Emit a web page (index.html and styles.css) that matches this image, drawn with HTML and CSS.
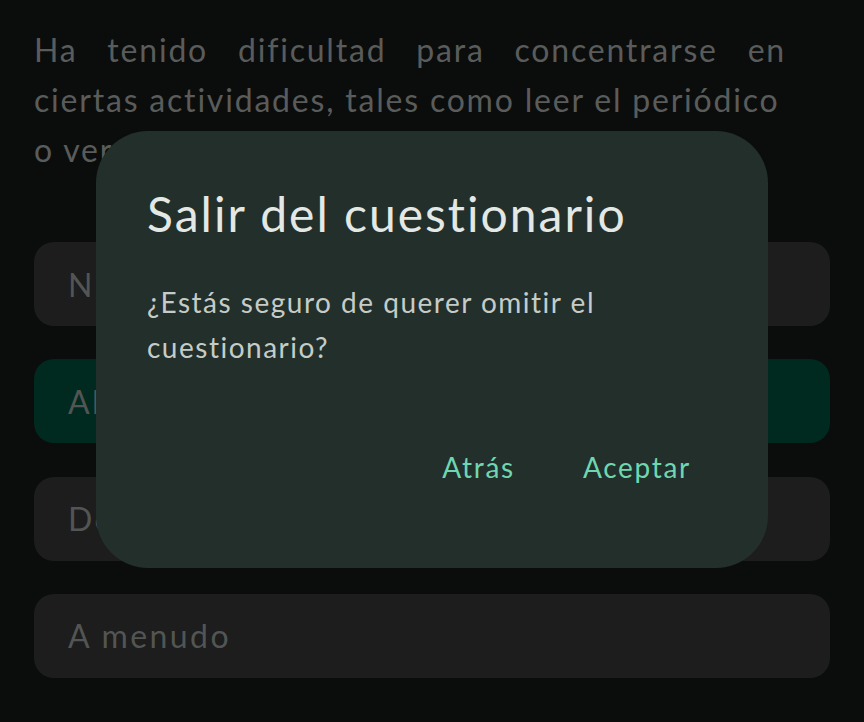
FILE: index.html
```html
<!DOCTYPE html>
<html lang="es">
<head>
<meta charset="utf-8">
<title>Cuestionario</title>
<link rel="stylesheet" href="styles.css">
</head>
<body>
<main class="screen">
  <div class="question">
    <span class="line line-justify">Ha tenido dificultad para concentrarse en</span>
    <span class="line">ciertas actividades, tales como leer el periódico</span>
    <span class="line">o ver televisión?</span>
  </div>
  <div class="options">
    <div class="option">Nunca</div>
    <div class="option option-selected">Algunas veces</div>
    <div class="option">De vez en cuando</div>
    <div class="option">A menudo</div>
  </div>
</main>
<div class="dialog" role="dialog">
  <h1 class="dialog-title">Salir del cuestionario</h1>
  <p class="dialog-body">¿Estás seguro de querer omitir el cuestionario?</p>
  <div class="dialog-actions">
    <button class="dialog-btn">Atrás</button>
    <button class="dialog-btn">Aceptar</button>
  </div>
</div>
</body>
</html>
```

FILE: styles.css
```css
html, body {
  margin: 0;
  padding: 0;
  background: #0b0d0c;
  width: 864px;
  height: 722px;
  overflow: hidden;
}
body {
  font-family: "Lato", "Noto Sans", sans-serif;
  font-variant-ligatures: none;
  position: relative;
}
.screen {
  padding: 25px 34px 0 34px;
  display: flex;
  flex-direction: column;
}
.question {
  width: 752px;
  color: #5a5c5b;
  font-size: 32px;
  line-height: 50px;
  letter-spacing: 1.8px;
}
.line {
  display: block;
  white-space: nowrap;
}
.line-justify {
  text-align: justify;
  text-align-last: justify;
  white-space: normal;
}
.options {
  margin-top: 67px;
  display: flex;
  flex-direction: column;
  gap: 33.3px;
}
.option {
  height: 84px;
  box-sizing: border-box;
  border-radius: 20px;
  background: #1c1d1c;
  color: #525554;
  font-size: 32px;
  padding-left: 34px;
  display: flex;
  align-items: center;
  letter-spacing: 2.4px;
}
.option-selected {
  background: #002a1f;
}
.dialog {
  position: absolute;
  left: 96px;
  top: 131px;
  width: 672px;
  height: 437px;
  box-sizing: border-box;
  border-radius: 52px;
  background: #232f2b;
  padding: 51px 77px 0 51px;
  display: flex;
  flex-direction: column;
}
.dialog-title {
  margin: 0;
  font-weight: 400;
  font-size: 48px;
  line-height: 64px;
  letter-spacing: 2px;
  color: #e3e8e5;
}
.dialog-body {
  margin: 34px 0 0 0;
  font-size: 28px;
  line-height: 45px;
  letter-spacing: 1.5px;
  color: #c5ccc8;
  width: 480px;
}
.dialog-actions {
  margin-top: 77px;
  display: flex;
  justify-content: flex-end;
  gap: 68px;
}
.dialog-btn {
  font-family: inherit;
  font-variant-ligatures: none;
  background: none;
  border: none;
  padding: 0;
  font-size: 28px;
  line-height: 40px;
  color: #6ed7b1;
  letter-spacing: 1.7px;
}
```
